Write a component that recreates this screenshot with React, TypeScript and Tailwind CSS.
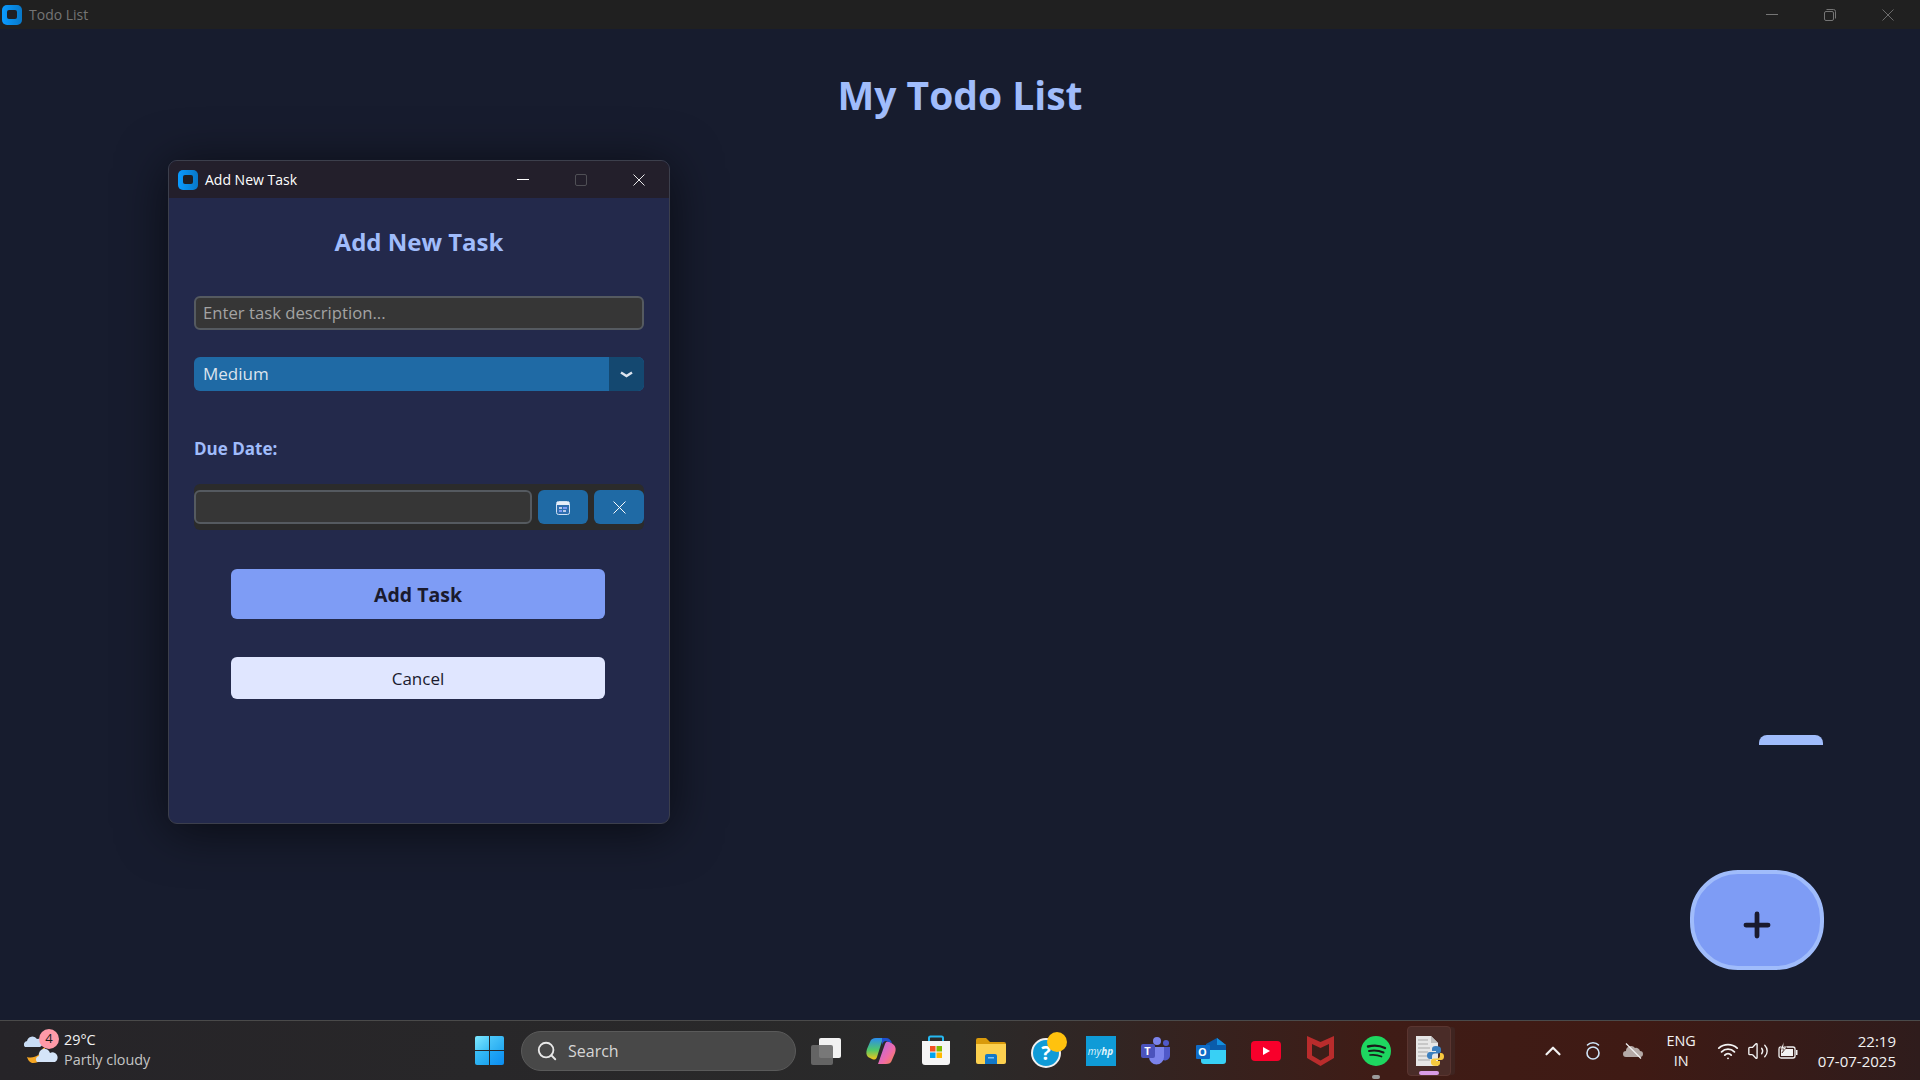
import { Plus, Search, Volume2, Wifi, ChevronUp } from 'lucide-react'

const font = "font-['Open_Sans','Noto_Sans',sans-serif]"

function AppIcon({ className }: { className: string }) {
  return (
    <span className={`relative block rounded-[5px] bg-gradient-to-r from-[#0a9bff] to-[#0878c8] ${className}`}>
      <span className="absolute inset-[26%] rounded-[2px] bg-[#1f1f24]" />
    </span>
  )
}

function MinIcon() {
  return (
    <svg width="12" height="12" viewBox="0 0 12 12" fill="none" stroke="currentColor">
      <path d="M0 5.500 H12" />
    </svg>
  )
}

function CloseIcon({ size = 12 }: { size?: number }) {
  return (
    <svg width={size} height={size} viewBox="0 0 12 12" fill="none" stroke="currentColor" strokeWidth="0.900">
      <path d="M0.500 0.500 L11.500 11.500 M11.500 0.500 L0.500 11.500" />
    </svg>
  )
}

function CalendarIcon() {
  return (
    <svg width="14" height="14" viewBox="0 0 14 14" className="mt-[2px]">
      <rect x="0.500" y="0.500" width="13" height="13" rx="2" fill="#2f6fb0" stroke="#cfe0f2" />
      <rect x="1" y="1" width="12" height="3" fill="#e6eef8" />
      <rect x="3" y="6" width="3" height="2" fill="#b9cbe8" />
      <rect x="7" y="6" width="4" height="2" fill="#7e9cf5" />
      <rect x="3" y="9" width="3" height="2" fill="#7e9cf5" />
      <rect x="7" y="9" width="3" height="2" fill="#b9cbe8" />
    </svg>
  )
}

function WeatherIcon() {
  return (
    <div className="relative h-[40px] w-[40px]">
      <svg width="40" height="40" viewBox="0 0 40 40" className="absolute top-0 left-0">
        <path d="M21 17 C22 26 15 33 8 32 C5 31 4 29 3 26 C10 28 17 24 19 17 Z" fill="#f5a623" />
        <path d="M1 16 a3.500 3.500 0 0 1 2-6 a5.500 5.500 0 0 1 10-2 a4 4 0 0 1 3 8 Z" fill="#c8dcf5" />
        <path d="M13 31 a3.500 3.500 0 0 1 2-6 a5.500 5.500 0 0 1 11-3 a4.500 4.500 0 0 1 5 9 Z" fill="#d4e4f8" />
      </svg>
      <span className="absolute top-[-2px] left-[15px] flex h-5 w-5 items-center justify-center rounded-full bg-[#ff9aa8] text-[13px] leading-none text-[#1a1a1a]">
        4
      </span>
    </div>
  )
}

function StartIcon() {
  return (
    <div className="grid h-[29px] w-[29px] grid-cols-2 gap-[1px]">
      <span className="rounded-tl-[2px] bg-gradient-to-br from-[#7ce8ff] to-[#37bdf5]" />
      <span className="rounded-tr-[2px] bg-gradient-to-br from-[#4cc8fa] to-[#22a9f0]" />
      <span className="rounded-bl-[2px] bg-gradient-to-br from-[#3cc0f7] to-[#1aa2ee]" />
      <span className="rounded-br-[2px] bg-gradient-to-br from-[#22a8f5] to-[#0c8df0]" />
    </div>
  )
}

function TaskViewIcon() {
  return (
    <svg width="32" height="28" viewBox="0 0 32 28">
      <rect x="9" y="1" width="22" height="20" rx="2" fill="#f2f2f2" />
      <rect x="1" y="8" width="22" height="20" rx="2" fill="#6a6a6a" fillOpacity="0.9" />
    </svg>
  )
}

function CopilotIcon() {
  return (
    <svg width="30" height="28" viewBox="0 0 30 28">
      <defs>
        <linearGradient id="cpA" x1="0" y1="0" x2="0" y2="1">
          <stop offset="0" stopColor="#2a8cf0" />
          <stop offset="0.55" stopColor="#4fc86a" />
          <stop offset="1" stopColor="#f5c518" />
        </linearGradient>
        <linearGradient id="cpB" x1="0" y1="0" x2="1" y2="1">
          <stop offset="0" stopColor="#a86bf0" />
          <stop offset="0.6" stopColor="#f06aa8" />
          <stop offset="1" stopColor="#f58a3c" />
        </linearGradient>
      </defs>
      <path d="M10 1 h7 L11 20 C10 23 8 23 6 22 L2 20 C0 18 0 15 1 12 L4 5 C5 2 7 1 10 1 Z" fill="url(#cpA)" />
      <path d="M20 27 h-8 L19 7 C20 4 22 4 24 5 L28 8 C30 10 30 13 29 16 L26 23 C25 26 23 27 20 27 Z" fill="url(#cpB)" />
      <path d="M16 1 h4 C23 1 25 3 26 6 L20 4 C18 4 17 5 16 8 Z" fill="#1e4fd0" />
    </svg>
  )
}

function StoreIcon() {
  return (
    <svg width="30" height="32" viewBox="0 0 30 32">
      <path d="M8 7 V3 a1.500 1.500 0 0 1 1.500-1.500 h11 A1.500 1.500 0 0 1 22 3 V7" fill="none" stroke="#25b8f0" strokeWidth="2" />
      <path d="M1 6 H29 V27 a3 3 0 0 1-3 3 H4 a3 3 0 0 1-3-3 Z" fill="#f5f5f5" />
      <rect x="9" y="11" width="5.500" height="5.500" fill="#f25022" />
      <rect x="15.500" y="11" width="5.500" height="5.500" fill="#7fba00" />
      <rect x="9" y="17.500" width="5.500" height="5.500" fill="#00a4ef" />
      <rect x="15.500" y="17.500" width="5.500" height="5.500" fill="#ffb900" />
    </svg>
  )
}

function FilesIcon() {
  return (
    <svg width="32" height="28" viewBox="0 0 32 28">
      <path d="M1 3 a2 2 0 0 1 2-2 h8 l4 4 H29 a2 2 0 0 1 2 2 v4 H1 Z" fill="#d99a0b" />
      <path d="M1 7 H31 V25 a2 2 0 0 1-2 2 H3 a2 2 0 0 1-2-2 Z" fill="#fcd04f" />
      <path d="M10 19 a2 2 0 0 1 2-2 h8 a2 2 0 0 1 2 2 v8 H10 Z" fill="#1378c8" />
      <rect x="13" y="20" width="6" height="1.500" fill="#7cc4f5" />
    </svg>
  )
}

function HelpIcon() {
  return (
    <div className="relative ml-[6px] h-[38px] w-[36px]">
      <svg width="30" height="30" viewBox="0 0 30 30" className="absolute top-[6px] left-0">
        <circle cx="15" cy="15" r="14" fill="#0f9bd7" stroke="#f0f0f0" strokeWidth="2" />
        <text x="15" y="22" textAnchor="middle" fontSize="20" fontWeight="700" fill="#fff" fontFamily="Open Sans">
          ?
        </text>
      </svg>
      <span className="absolute top-0 right-0 h-5 w-5 rounded-full bg-[#ffc20e]" />
    </div>
  )
}

function TeamsIcon() {
  return (
    <div className="relative h-[28px] w-[30px]">
      <svg width="30" height="28" viewBox="0 0 30 28" className="absolute top-0 left-0">
        <circle cx="16" cy="4" r="4" fill="#7b83eb" />
        <circle cx="25" cy="6" r="3" fill="#5059c9" />
        <path d="M20 10 h9 v8 a5 5 0 0 1-7 5 Z" fill="#5059c9" />
        <path d="M8 10 H23 V20 a7.500 7.500 0 0 1-15 0 Z" fill="#7b83eb" />
        <rect x="0" y="7" width="14" height="14" rx="2" fill="#4b53bc" />
      </svg>
      <span className="absolute top-[7px] left-0 w-[14px] text-center text-[11px] leading-[14px] font-bold text-white">T</span>
    </div>
  )
}

function OutlookIcon() {
  return (
    <div className="relative h-[26px] w-[30px]">
      <svg width="30" height="26" viewBox="0 0 30 26" className="absolute top-0 left-0">
        <path d="M10 6 L21 0 L30 7 V12 H10 Z" fill="#0a5cab" />
        <path d="M21 0 L30 7 H21 Z" fill="#1490df" />
        <path d="M5 12 H30 V23 a3 3 0 0 1-3 3 H8 a3 3 0 0 1-3-3 Z" fill="#38d0f5" />
      </svg>
      <span className="absolute top-[7px] left-0 h-[14px] w-[14px] rounded-[1px] bg-[#0f6cc8] text-center text-[11px] leading-[14px] font-bold text-white">
        O
      </span>
    </div>
  )
}

function YoutubeIcon() {
  return (
    <svg width="30" height="20" viewBox="0 0 30 20">
      <rect width="30" height="20" rx="4" fill="#f8002b" />
      <path d="M12 6 L19 10 L12 14 Z" fill="#fff" />
    </svg>
  )
}

function McafeeIcon() {
  return (
    <svg width="27" height="30" viewBox="0 0 27 30">
      <path d="M0 0 L13.500 6 L27 0 V22 L13.500 30 L0 22 Z M5 8 V19.500 L13.500 24.500 L22 19.500 V8 L13.500 12 Z" fill="#b92c2c" fillRule="evenodd" />
    </svg>
  )
}

function SpotifyIcon() {
  return (
    <svg width="30" height="30" viewBox="0 0 30 30">
      <circle cx="15" cy="15" r="15" fill="#1ed760" />
      <path d="M7 10.500 C13 9 19 9.500 24 12" fill="none" stroke="#1a1a1a" strokeWidth="2.400" strokeLinecap="round" />
      <path d="M8 15 C13 14 18 14.500 22.500 16.500" fill="none" stroke="#1a1a1a" strokeWidth="2" strokeLinecap="round" />
      <path d="M9 19 C13 18.500 17 19 20.500 20.500" fill="none" stroke="#1a1a1a" strokeWidth="1.700" strokeLinecap="round" />
    </svg>
  )
}

function PythonFileIcon() {
  return (
    <svg width="30" height="32" viewBox="0 0 30 32">
      <path d="M2 1 H17 L24 8 V31 H2 Z" fill="#e6e6e6" />
      <path d="M17 1 V8 H24 Z" fill="#bdbdbd" />
      <path d="M4 5 H14 M4 9 H14 M4 13 H16 M4 17 H14 M4 21 H14 M4 25 H16" stroke="#a8a8a8" strokeWidth="1" />
      <path d="M22 11 c-3 0-4 1-4 3 v2 h4 v1 h-6 c-2 0-3 1.500-3 3.500 s1 3.500 3 3.500 h2 v-2.500 c0-2 1-3 3-3 h3 c2 0 3-1 3-2.500 v-2 c0-2-2-3-5-3 Z" fill="#3b7fbf" />
      <path d="M22 31 c3 0 4-1 4-3 v-2 h-4 v-1 h5 c2 0 3-1.500 3-3.500 s-1-3.500-3-3.500 h-1 v2.500 c0 2-1 3-3 3 h-3 c-2 0-3 1-3 2.500 v2 c0 2 2 3 5 3 Z" fill="#f7c93e" />
    </svg>
  )
}

function MyHpIcon() {
  return (
    <div className="flex h-[30px] w-[30px] items-center justify-center bg-[#0f9bd7] text-[10px] leading-none text-[#dff3fc] italic">
      my<span className="font-bold">hp</span>
    </div>
  )
}

function HpRingIcon() {
  return (
    <svg width="16" height="20" viewBox="0 0 16 20" fill="none" stroke="#cfe4f7" strokeWidth="1.600">
      <circle cx="8" cy="12" r="6" />
      <path d="M2.500 4 C5 1 11 1 13.500 4" strokeLinecap="round" />
    </svg>
  )
}

function CloudOffIcon() {
  return (
    <svg width="20" height="16" viewBox="0 0 20 16">
      <path d="M3 14 a3 3 0 0 1 0-6 a5 5 0 0 1 9-3 a4 4 0 0 1 5 3 a3 3 0 0 1 0 6 Z" fill="#b5aaa7" />
      <path d="M3 0.500 L18 15.500" stroke="#f0f0f0" strokeWidth="1.200" />
    </svg>
  )
}

function BatteryIcon() {
  return (
    <svg width="20" height="18" viewBox="0 0 20 18" fill="none">
      <rect x="1" y="5" width="16" height="11" rx="2" stroke="#f2f2f2" strokeWidth="1.300" />
      <rect x="3" y="7" width="12" height="7" fill="#f2f2f2" />
      <rect x="18" y="8" width="1.500" height="5" fill="#f2f2f2" />
      <path d="M6 0 L2 7 H6 L4 11 L9 5 H5.500 Z" fill="#f2f2f2" stroke="#3a1c16" strokeWidth="0.600" />
    </svg>
  )
}

const taskbarApps = [
  { name: 'taskview', icon: <TaskViewIcon /> },
  { name: 'copilot', icon: <CopilotIcon /> },
  { name: 'store', icon: <StoreIcon /> },
  { name: 'files', icon: <FilesIcon /> },
  { name: 'help', icon: <HelpIcon /> },
  { name: 'myhp', icon: <MyHpIcon /> },
  { name: 'teams', icon: <TeamsIcon /> },
  { name: 'outlook', icon: <OutlookIcon /> },
  { name: 'youtube', icon: <YoutubeIcon /> },
  { name: 'mcafee', icon: <McafeeIcon /> },
]

function Taskbar() {
  return (
    <footer className="flex h-[60px] shrink-0 items-center border-t border-[#4a4a4a] bg-[linear-gradient(90deg,#262428_0%,#2a2a2a_50%,#3f1c16_72%,#3f1a14_85%,#2f1c1c_100%)] text-[#f2f2f2]">
      <div className="flex w-[475px] shrink-0 items-center pl-[24px]">
        <WeatherIcon />
        <div className="mt-[-2px] flex flex-col text-[14.400px] leading-[20px]">
          <span>29°C</span>
          <span className="text-[#c4c4c4]">Partly cloudy</span>
        </div>
      </div>

      <StartIcon />

      <div className="ml-[17px] flex h-[40px] w-[275px] items-center rounded-full border border-[#5a5a5a] bg-[#484848] pl-[14px] text-[16px] text-[#d6d6d6]">
        <Search size={22} strokeWidth={2} className="text-[#e8e8e8]" />
        <span className="ml-[10px]">Search</span>
      </div>

      <div className="ml-[2px] flex items-center">
        {taskbarApps.map(app => (
          <div key={app.name} className="flex h-[60px] w-[55px] items-center justify-center">
            {app.icon}
          </div>
        ))}
        <div className="relative flex h-[60px] w-[55px] items-center justify-center">
          <SpotifyIcon />
          <span className="absolute bottom-[2px] h-[4px] w-[8px] rounded-full bg-[#9b9b9b]" />
        </div>
        <div className="relative ml-[4px] flex h-[50px] w-[44px] items-center justify-center rounded-[4px] border border-[#5a3530] bg-[#4a2c28] shadow-[5px_0_0_-1px_#3f2420]">
          <PythonFileIcon />
          <span className="absolute bottom-[0px] h-[4px] w-[20px] rounded-full bg-[#d99ce6]" />
        </div>
      </div>

      <div className="ml-auto flex items-center pr-[24px]">
        <ChevronUp size={26} strokeWidth={2} className="mr-[19px]" />
        <div className="mr-[22px]">
          <HpRingIcon />
        </div>
        <div className="mr-[23px]">
          <CloudOffIcon />
        </div>
        <div className="mr-[21px] flex flex-col items-center text-[14.400px] leading-[20px]">
          <span>ENG</span>
          <span>IN</span>
        </div>
        <Wifi size={22} strokeWidth={2} className="mr-[8px]" />
        <Volume2 size={22} strokeWidth={1.500} className="mr-[9px]" />
        <div className="mr-[20px]">
          <BatteryIcon />
        </div>
        <div className="flex flex-col items-end text-[15px] leading-[20px]">
          <span>22:19</span>
          <span>07-07-2025</span>
        </div>
      </div>
    </footer>
  )
}

function AddTaskDialog() {
  return (
    <div className="absolute top-[131px] left-[168px] flex h-[664px] w-[502px] flex-col overflow-hidden rounded-[9px] border border-[#3c3f4c] bg-[#23294b] shadow-[0_6px_50px_rgba(0,0,0,0.6)]">
      <div className="flex h-[37px] shrink-0 items-center bg-[#231f2b] pl-[9px] text-white">
        <AppIcon className="h-[20px] w-[20px]" />
        <span className="ml-[7px] text-[14px]">Add New Task</span>
        <div className="ml-auto flex items-center">
          <MinIcon />
          <span className="mx-[46px] block h-[12px] w-[12px] rounded-[2px] border border-[#4f4f55]" />
          <span className="mr-[24px] block">
            <CloseIcon />
          </span>
        </div>
      </div>

      <div className="flex flex-1 flex-col px-[25px]">
        <h2 className="mt-[28px] text-center text-[24px] leading-[32px] font-bold text-[#a0bcfb]">Add New Task</h2>

        <div className="mt-[38px] flex h-[34px] items-center rounded-[6px] border-2 border-[#555a60] bg-[#363636] px-[7px] text-[16.700px] text-[#a3a3a3]">
          Enter task description...
        </div>

        <div className="mt-[27px] flex h-[34px] overflow-hidden rounded-[6px] bg-[#1f6aa5] text-[17px] text-[#dce4ee]">
          <span className="flex flex-1 items-center pl-[9px]">Medium</span>
          <span className="flex w-[35px] items-center justify-center bg-[#144870]">
            <svg width="13" height="7" viewBox="0 0 13 7" fill="none" stroke="#dce4ee" strokeWidth="2.500">
              <path d="M1 1.500 L6.500 5 L12 1.500" />
            </svg>
          </span>
        </div>

        <div className="mt-[46px] text-[17px] leading-[24px] font-bold text-[#a0bcfb]">Due Date:</div>

        <div className="mt-[23px] flex h-[46px] items-center gap-[6px] rounded-[6px] bg-[#2b2b2b]">
          <div className="h-[34px] flex-1 rounded-[6px] border-2 border-[#555a60] bg-[#363636]" />
          <button type="button" className="flex h-[34px] w-[50px] items-center justify-center rounded-[6px] bg-[#1f6aa5]">
            <CalendarIcon />
          </button>
          <button type="button" className="flex h-[34px] w-[50px] items-center justify-center rounded-[6px] bg-[#1f6aa5] text-white">
            <CloseIcon size={13} />
          </button>
        </div>

        <button
          type="button"
          className="mt-[39px] ml-[37px] flex h-[50px] w-[374px] items-center justify-center rounded-[6px] bg-[#7e9cf5] pt-[2px] text-[19.500px] font-bold text-[#1a1a2e]"
        >
          Add Task
        </button>
        <button
          type="button"
          className="mt-[38px] ml-[37px] flex h-[42px] w-[374px] items-center justify-center rounded-[6px] bg-[#e0e6ff] pt-[2px] text-[17px] text-[#1a1a2e]"
        >
          Cancel
        </button>
      </div>
    </div>
  )
}

export default function App() {
  return (
    <div className={`flex h-screen w-full flex-col overflow-hidden bg-[#171c2e] ${font}`}>
      <header className="flex h-[29px] shrink-0 items-center bg-[#202020] pl-[2px] text-[#757575]">
        <AppIcon className="h-[20px] w-[20px]" />
        <span className="ml-[7px] text-[14px]">Todo List</span>
        <div className="ml-auto flex items-center">
          <MinIcon />
          <svg width="12" height="12" viewBox="0 0 12 12" fill="none" stroke="#757575" className="mx-[46px]">
            <rect x="0.500" y="2.500" width="9" height="9" rx="1.500" />
            <path d="M2.500 0.500 H9.500 A2 2 0 0 1 11.500 2.500 V9.500" />
          </svg>
          <span className="mr-[26px] block">
            <CloseIcon />
          </span>
        </div>
      </header>

      <main className="relative flex-1">
        <h1 className="mt-[40px] text-center text-[39px] leading-[52px] font-bold text-[#a0bcfb]">My Todo List</h1>
        <AddTaskDialog />
        <div className="absolute top-[706px] left-[1759px] h-[10px] w-[64px] rounded-t-[8px] bg-[#a0bcfb]" />
        <button
          type="button"
          className="absolute top-[841px] left-[1690px] flex h-[100px] w-[134px] items-center justify-center rounded-[48px] border-4 border-[#a0bcfb] bg-[#7e9cf5] text-[#1a1a2e]"
        >
          <Plus size={38} strokeWidth={3} className="mt-[10px]" />
        </button>
      </main>

      <Taskbar />
    </div>
  )
}
